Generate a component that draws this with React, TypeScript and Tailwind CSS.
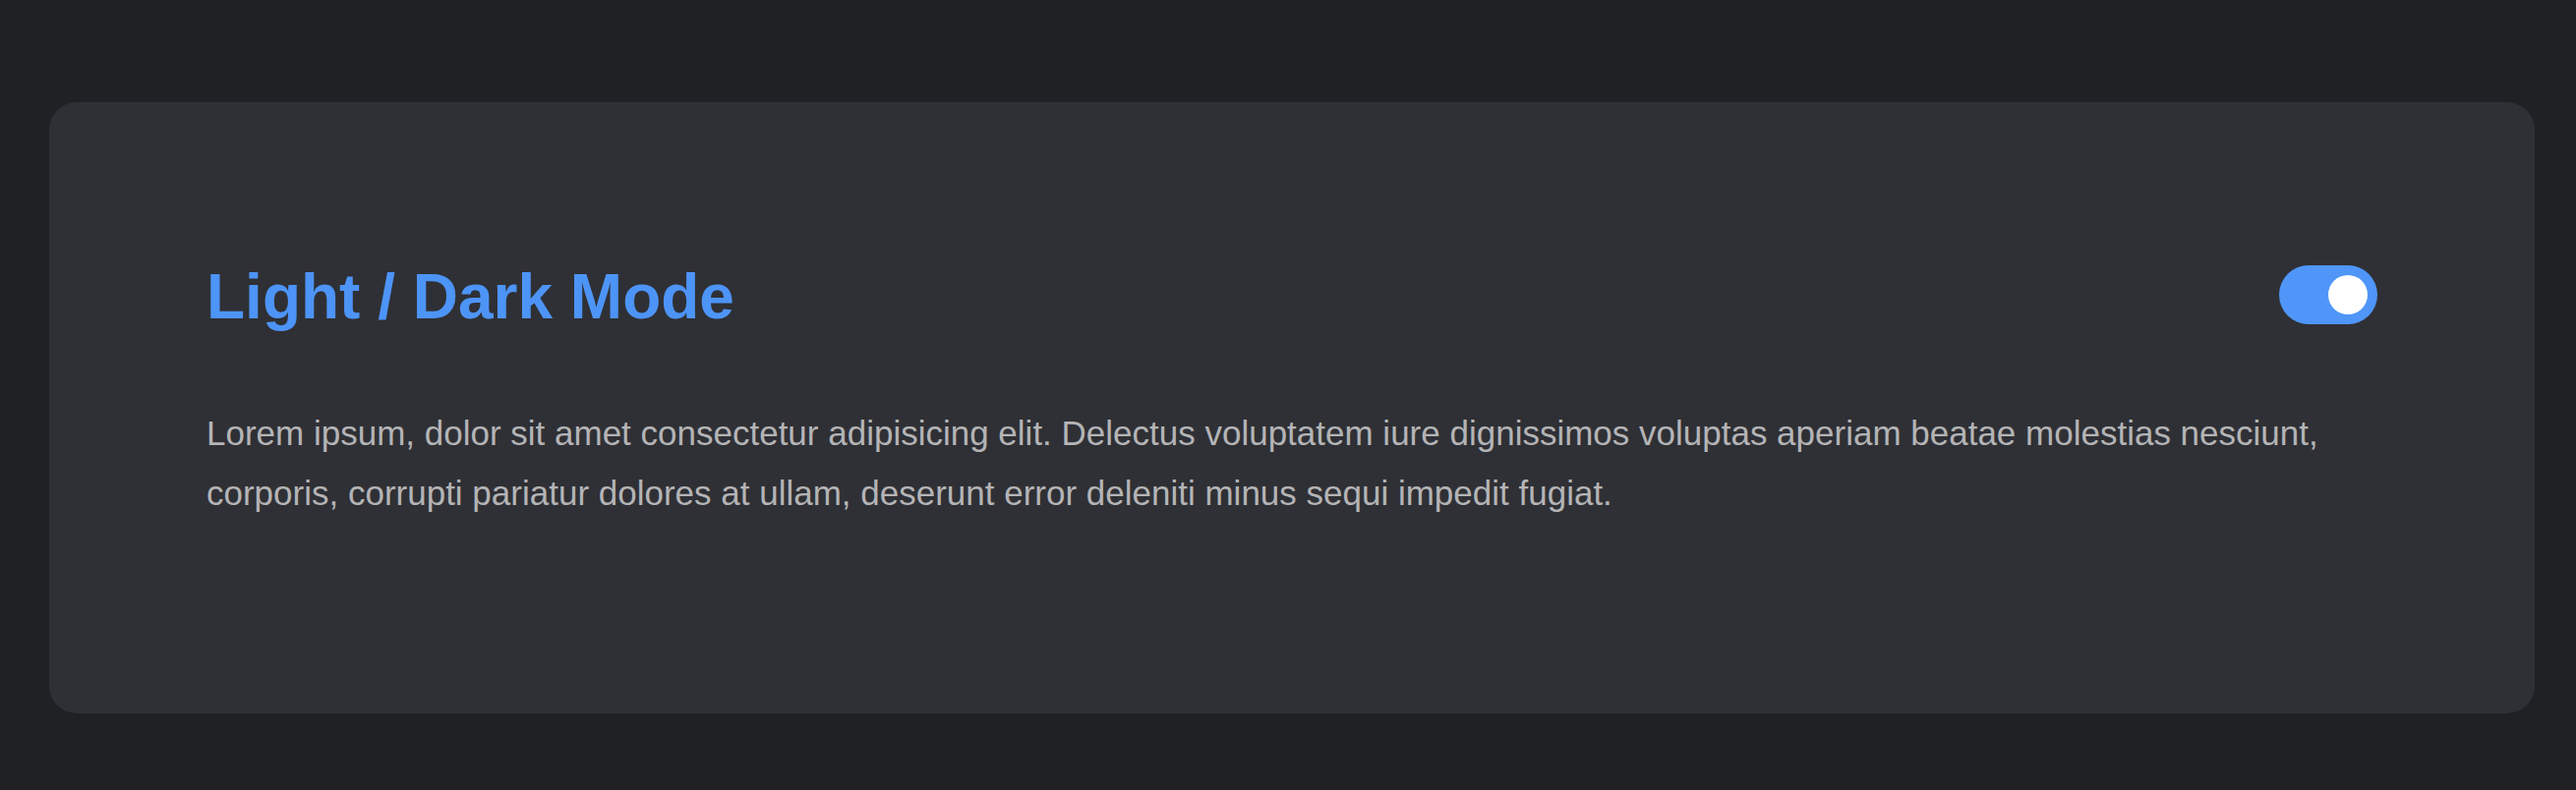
import { useState } from "react";

export default function App() {
  const [dark, setDark] = useState(true);

  return (
    <div className="min-h-[804px] bg-[#202125] pt-[104px] pb-[78px] pl-[50px] pr-[42px] font-['Liberation_Sans',Arial,sans-serif]">
      <div className="bg-[#2f3035] rounded-[28px] px-[160px] pt-[160px] h-[622px]">
        <div className="flex items-center justify-between h-[72px]">
          <h1 className="text-[64px] leading-[72px] pt-[3px] font-bold text-[#4d94f7]">Light / Dark Mode</h1>
          <button
            type="button"
            onClick={() => setDark(!dark)}
            className={`flex items-center w-[100px] h-[60px] rounded-full p-[10px] ${
              dark ? "bg-[#4f96f8] justify-end" : "bg-[#5a5b61] justify-start"
            }`}
          >
            <span className="block w-[40px] h-[40px] rounded-full bg-white" />
          </button>
        </div>
        <p className="mt-[74px] text-[35px] leading-[61px] text-[#b4b4b6]">
          Lorem ipsum, dolor sit amet consectetur adipisicing elit. Delectus voluptatem iure dignissimos voluptas
          aperiam beatae molestias nesciunt, corporis, corrupti pariatur dolores at ullam, deserunt error deleniti
          minus sequi impedit fugiat.
        </p>
      </div>
    </div>
  );
}
